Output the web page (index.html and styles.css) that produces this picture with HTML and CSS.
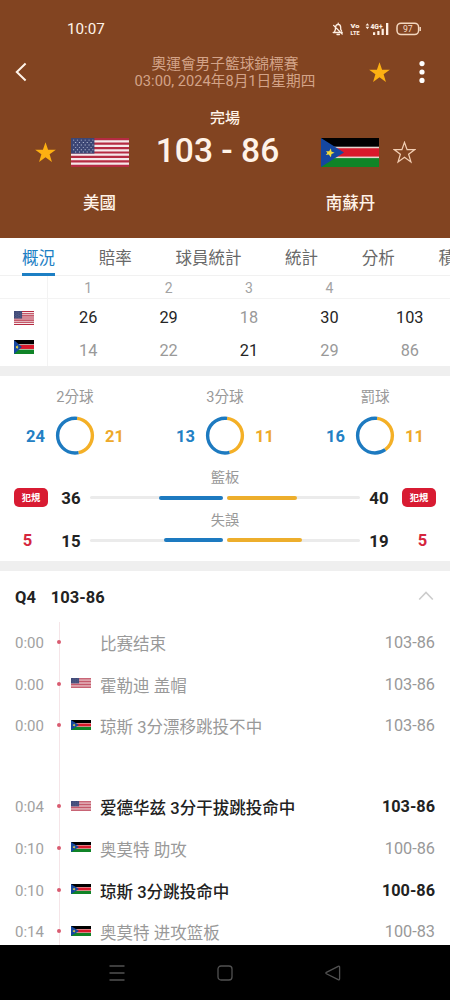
FILE: index.html
```html
<!DOCTYPE html>
<html lang="zh-Hant">
<head>
<meta charset="utf-8">
<meta name="viewport" content="width=device-width">
<title>美國 - 南蘇丹</title>
<link rel="stylesheet" href="styles.css">
</head>
<body>
<svg class="defs" width="0" height="0" aria-hidden="true">
  <symbol id="us" viewBox="0 0 57 30" preserveAspectRatio="none">
    <rect width="57" height="30" fill="#f5e9ea"/>
    <path d="M0 1.15H57M0 5.77H57M0 10.38H57M0 15H57M0 19.6H57M0 24.2H57M0 28.85H57" stroke="#b52b42" stroke-width="2.3"/>
    <rect width="23" height="16.1" fill="#3c4675"/>
    <path d="M2 2.2H22M4 4.7H22M2 7.2H22M4 9.7H22M2 12.2H22M4 14.4H22" stroke="#b9bfd6" stroke-width="1" stroke-dasharray="1.1 2.7"/>
  </symbol>
  <symbol id="ss" viewBox="0 0 58 30" preserveAspectRatio="none">
    <rect width="58" height="30" fill="#e5d6cf"/>
    <rect width="58" height="9" fill="#000"/>
    <rect y="10.6" width="58" height="8.6" fill="#d9182b"/>
    <rect y="20.8" width="58" height="9.2" fill="#108427"/>
    <path d="M0 0L23 15L0 30Z" fill="#1547a0"/>
    <path d="M5 13.6L8.2 13.6L9.9 10.6L10.4 14L13.6 15.2L10.5 16.5L9.9 19.8L7.8 17L4.8 17.6L6.4 15.4Z" fill="#f2dc3c"/>
  </symbol>
  <symbol id="star" viewBox="0 0 24 24">
    <path d="M12 1.4L14.7 9H22.8L16.3 13.8L18.7 21.8L12 17L5.3 21.8L7.7 13.8L1.2 9H9.3Z"/>
  </symbol>
</svg>

<header class="hero">
  <div class="status">
    <span class="clock">10:07</span>
    <svg class="status-icons" width="92" height="16" viewBox="0 0 92 16">
      <path d="M2.2 11.5H11.2M3.4 11L4.4 8.6V6.6C4.6 4.6 5.7 3.4 7.2 3.3C8.9 3.5 9.7 4.8 9.7 6.4V8.4L10.6 10M7.2 2.2V3M6 13.5H8.4M2.6 4.4L11.2 13" fill="none" stroke="#fff0e4" stroke-width="1.3" stroke-linecap="round"/>
      <g fill="#fff0e4" font-family="Roboto, sans-serif" font-weight="900">
        <text x="19.6" y="6.6" font-size="6.2" textLength="9" lengthAdjust="spacingAndGlyphs">Vo</text>
        <text x="19.6" y="14" font-size="6.2" textLength="9" lengthAdjust="spacingAndGlyphs">LTE</text>
        <text x="39.5" y="7.6" font-size="7" textLength="12" lengthAdjust="spacingAndGlyphs">4G+</text>
      </g>
      <path fill="#fff0e4" d="M34.6 4.6L36.4 2.2L38.2 4.6ZM34.6 5.8L36.4 8.2L38.2 5.8ZM42 11.3H44.2V14H42ZM46.3 10H48.5V14H46.3ZM50.6 7.8H52.8V14H50.6ZM55 2H57.3V14H55Z"/>
      <rect x="66" y="2.2" width="21.6" height="11.4" rx="4" fill="none" stroke="#f4d7bf" stroke-width="1.5"/>
      <path d="M89.2 6V10" stroke="#f4d7bf" stroke-width="1.5"/>
      <text x="76.8" y="11" text-anchor="middle" font-family="Roboto, sans-serif" font-size="8.6" fill="#f6dfcc">97</text>
    </svg>
  </div>
  <div class="titlebar">
    <svg class="back" width="14" height="20" viewBox="0 0 14 20"><path d="M11.6 1.5L2.8 10L11.6 18.5" fill="none" stroke="#fff4ea" stroke-width="2"/></svg>
    <div class="event"><div>奧運會男子籃球錦標賽</div><div>03:00, 2024年8月1日星期四</div></div>
    <svg class="fav" width="23" height="23" fill="#fdb012"><use href="#star"/></svg>
    <svg class="more" width="6" height="24" viewBox="0 0 6 24" fill="#fff"><circle cx="3" cy="3.6" r="2.6"/><circle cx="3" cy="12" r="2.6"/><circle cx="3" cy="20.4" r="2.6"/></svg>
  </div>
  <div class="state">完場</div>
  <div class="match">
    <svg class="team-star" width="23" height="23" fill="#fdb012"><use href="#star"/></svg>
    <svg class="flag-big" width="58" height="29"><use href="#us"/></svg>
    <div class="score">103 - 86</div>
    <svg class="flag-big" width="58" height="29"><use href="#ss"/></svg>
    <svg class="team-star" width="23" height="23" fill="none" stroke="#f3cfb4" stroke-width="1.3"><use href="#star"/></svg>
  </div>
  <div class="names"><span>美國</span><span>南蘇丹</span></div>
</header>

<nav class="tabs">
  <a class="tab active">概況</a><a class="tab">賠率</a><a class="tab">球員統計</a><a class="tab">統計</a><a class="tab">分析</a><a class="tab">積分</a>
</nav>

<section class="periods">
  <div class="prow head"><span></span><span>1</span><span>2</span><span>3</span><span>4</span><span></span></div>
  <div class="prow home"><span class="pf"><svg width="20" height="14"><use href="#us"/></svg></span><span class="win">26</span><span class="win">29</span><span>18</span><span class="win">30</span><span class="win">103</span></div>
  <div class="prow away"><span class="pf"><svg width="20" height="14"><use href="#ss"/></svg></span><span>14</span><span>22</span><span class="win">21</span><span>29</span><span>86</span></div>
</section>

<section class="stats">
  <div class="donuts">
    <div class="donut"><h3>2分球</h3><div class="ring"><b class="blue">24</b>
      <svg width="40" height="40" viewBox="0 0 40 40"><g transform="rotate(-90 20 19.6)"><circle class="away-arc" cx="20" cy="19.6" r="17.4" pathLength="100" stroke-dasharray="44.7 100" stroke-dashoffset="-2"/><circle class="home-arc" cx="20" cy="19.6" r="17.4" pathLength="100" stroke-dasharray="55.3 100" stroke-dashoffset="-46.7" transform="rotate(0 20 19.6)"/><circle class="home-arc" cx="20" cy="19.6" r="17.4" pathLength="100" stroke-dasharray="2 100"/></g></svg>
      <b class="gold">21</b></div></div>
    <div class="donut"><h3>3分球</h3><div class="ring"><b class="blue">13</b>
      <svg width="40" height="40" viewBox="0 0 40 40"><g transform="rotate(-90 20 19.6)"><circle class="away-arc" cx="20" cy="19.6" r="17.4" pathLength="100" stroke-dasharray="43.8 100" stroke-dashoffset="-2"/><circle class="home-arc" cx="20" cy="19.6" r="17.4" pathLength="100" stroke-dasharray="54.2 100" stroke-dashoffset="-45.8"/><circle class="home-arc" cx="20" cy="19.6" r="17.4" pathLength="100" stroke-dasharray="2 100"/></g></svg>
      <b class="gold">11</b></div></div>
    <div class="donut"><h3>罰球</h3><div class="ring"><b class="blue">16</b>
      <svg width="40" height="40" viewBox="0 0 40 40"><g transform="rotate(-90 20 19.6)"><circle class="away-arc" cx="20" cy="19.6" r="17.4" pathLength="100" stroke-dasharray="38 100" stroke-dashoffset="-2"/><circle class="home-arc" cx="20" cy="19.6" r="17.4" pathLength="100" stroke-dasharray="60 100" stroke-dashoffset="-40"/><circle class="home-arc" cx="20" cy="19.6" r="17.4" pathLength="100" stroke-dasharray="2 100"/></g></svg>
      <b class="gold">11</b></div></div>
  </div>
  <h4>籃板</h4>
  <div class="bar-row">
    <span class="foul">犯規</span><b>36</b>
    <span class="track left"><i style="width:64px"></i></span><span class="track right"><i style="width:70px"></i></span>
    <b>40</b><span class="foul">犯規</span>
  </div>
  <h4 class="second">失誤</h4>
  <div class="bar-row">
    <span class="fouls">5</span><b>15</b>
    <span class="track left"><i style="width:59px"></i></span><span class="track right"><i style="width:75px"></i></span>
    <b>19</b><span class="fouls">5</span>
  </div>
</section>

<section class="plays" lang="zh-Hans">
  <div class="quarter"><span>Q4</span><span>103-86</span>
    <svg width="16" height="10" viewBox="0 0 16 10"><path d="M1.2 8.5L8 1.5L14.8 8.5" fill="none" stroke="#ccc" stroke-width="1.6"/></svg>
  </div>
  <div class="feed">
    <div class="play"><time>0:00</time><i></i><span></span><p>比赛结束</p><em>103-86</em></div>
    <div class="play"><time>0:00</time><i></i><svg width="20" height="10"><use href="#us"/></svg><p>霍勒迪 盖帽</p><em>103-86</em></div>
    <div class="play tall"><time>0:00</time><i></i><svg width="20" height="10"><use href="#ss"/></svg><p>琼斯 3分漂移跳投不中</p><em>103-86</em></div>
    <div class="play scored"><time>0:04</time><i></i><svg width="20" height="10"><use href="#us"/></svg><p>爱德华兹 3分干拔跳投命中</p><em>103-86</em></div>
    <div class="play"><time>0:10</time><i></i><svg width="20" height="10"><use href="#ss"/></svg><p>奥莫特 助攻</p><em>100-86</em></div>
    <div class="play scored"><time>0:10</time><i></i><svg width="20" height="10"><use href="#ss"/></svg><p>琼斯 3分跳投命中</p><em>100-86</em></div>
    <div class="play"><time>0:14</time><i></i><svg width="20" height="10"><use href="#ss"/></svg><p>奥莫特 进攻篮板</p><em>100-83</em></div>
  </div>
</section>

<footer class="navbar">
  <svg width="18" height="18" viewBox="0 0 18 18"><path d="M1.5 2H16.5M1.5 9H16.5M1.5 16H16.5"/></svg>
  <svg width="18" height="18" viewBox="0 0 18 18"><rect x="2" y="2" width="14" height="14" rx="3"/></svg>
  <svg width="18" height="18" viewBox="0 0 18 18"><path d="M14.2 2.4Q15.6 1.8 15.6 3.4V14.6Q15.6 16.2 14.2 15.6L2.4 9.8Q1.4 9 2.4 8.3Z"/></svg>
</footer>
</body>
</html>
```
FILE: styles.css
```css
* { box-sizing: border-box; }
body {
  margin: 0;
  width: 450px;
  height: 1000px;
  overflow: hidden;
  display: flex;
  flex-direction: column;
  background: #fff;
  color: #222;
  font-family: Roboto, "Noto Sans CJK TC", sans-serif;
}
[lang="zh-Hans"] { font-family: Roboto, "Noto Sans CJK SC", sans-serif; }
svg { display: block; flex: none; }
h3, h4, p { margin: 0; font-weight: 400; }
.defs { position: absolute; }

/* header */
.hero { height: 238px; flex: none; background: #824421; color: #fff3e8; }
.status {
  display: flex;
  align-items: center;
  justify-content: space-between;
  height: 58px;
  padding: 0 27px 0 67px;
}
.clock { font-size: 15.2px; }
.titlebar { display: flex; align-items: center; height: 28px; line-height: 17px; padding: 0 25px 0 14px; }
.event {
  flex: 1;
  margin-left: 54px;
  padding-top: 1px;
  text-align: center;
  font-size: 14.7px;
  white-space: nowrap;
  color: #d3a388;
}
.fav { margin-right: 28px; }
.state { margin-top: 20px; height: 24px; line-height: 24px; text-align: center; font-size: 15px; font-weight: 500; }
.match { display: flex; align-items: center; height: 44px; padding: 0 34px; }
.match .flag-big { margin-left: 14px; }
.score {
  flex: 1;
  height: 44px;
  padding-right: 3px;
  text-align: center;
  font-size: 33.6px;
  font-weight: 500;
  line-height: 41px;
  white-space: nowrap;
}
.match .score + .flag-big { margin-left: 12px; }
.match .flag-big + .team-star { margin-left: 14px; }
.names { display: flex; height: 24px; margin-top: 17px; padding: 0 25px; font-size: 16.5px; font-weight: 500; line-height: 25px; }
.names span { width: 149px; text-align: center; }
.names span + span { margin-left: 102px; }

/* tabs */
.tabs {
  flex: none;
  display: flex;
  gap: 43.7px;
  height: 38px;
  padding-left: 22px;
  box-shadow: inset 0 -1px #f1f1f1;
  overflow: hidden;
  font-size: 16.5px;
  line-height: 42px;
  color: #686868;
}
.tab { flex: none; height: 38px; white-space: nowrap; }
.tab.active { color: #1d7fc4; box-shadow: inset 0 -3px #1d7fc4; }

/* period scores */
.periods { flex: none; height: 90px; color: #999; background: linear-gradient(#f3f3f3, #f3f3f3) 47px 0 / 1px 100% no-repeat; }
.prow { display: grid; grid-template-columns: 48px repeat(5, 1fr); text-align: center; font-size: 16.3px; }
.prow.head { height: 23px; line-height: 25px; font-size: 14px; color: #a3a3a3; border-bottom: 1px solid #f3f3f3; }
.prow.home { height: 36px; line-height: 37px; }
.prow.away { height: 31px; line-height: 31px; }
.pf { display: flex; align-items: center; justify-content: center; }
.away .pf { padding-bottom: 7px; }
.prow .win { color: #252525; }

/* team stats */
.stats { flex: none; height: 205px; border: solid #efefef; border-width: 10px 0; }
.donuts { display: grid; grid-template-columns: repeat(3, 1fr); }
.donut h3 { text-align: center; font-size: 14.6px; height: 39px; line-height: 42px; color: #999; }
.ring { display: flex; align-items: center; justify-content: center; gap: 10px; height: 41px; }
.ring b { width: 20px; padding-top: 2px; font-size: 16.5px; text-align: right; font-weight: 700; }
.ring .gold { text-align: left; }
.ring circle { fill: none; stroke-width: 3.4; }
.home-arc { stroke: #1d7ac0; }
.away-arc { stroke: #f4b027; }
.blue { color: #2380c4; }
.gold { color: #eea92a; }
h4 { margin-top: 11px; text-align: center; font-size: 14.2px; height: 20px; line-height: 20px; color: #999; }
h4.second { margin-top: 2px; }
.bar-row { display: flex; align-items: center; height: 21px; padding: 0 14px; }
.second + .bar-row { height: 20px; }
.bar-row b { width: 22px; margin: 0 8px 0 12px; padding-top: 1px; text-align: center; font-size: 16.8px; line-height: 20px; font-weight: 700; }
.bar-row .track + b { margin: 0 12px 0 8px; }
.track { display: flex; align-items: center; width: 133px; height: 3px; border-radius: 2px; background: #ebebeb; }
.track.left { justify-content: flex-end; }
.track.right { margin-left: 4px; }
.track i { height: 4px; border-radius: 2px; background: #1d7ac0; }
.track.right i { background: #edae2c; }
.foul { width: 34px; height: 19px; border-radius: 5px; background: #d81b32; color: #fff; font-size: 9.3px; font-weight: 700; line-height: 19px; text-align: center; }
.fouls { width: 34px; padding-top: 1px; text-align: center; color: #d5263d; font-size: 16.5px; line-height: 20px; font-weight: 700; }
.fouls:first-child { padding-right: 7px; }
.fouls:last-child { padding-left: 7px; }

/* play by play */
.plays { flex: 1; min-height: 0; overflow: hidden; }
.quarter { display: flex; align-items: center; height: 51px; padding: 1px 16px 0 15px; font-size: 16.5px; font-weight: 700; }
.quarter span + span { margin-left: 15px; }
.quarter svg { margin-left: auto; margin-bottom: 2px; }
.feed { background: linear-gradient(#f5e5e8, #f5e5e8) 59px 0 / 1px 100% no-repeat; color: #999; }
.play {
  display: grid;
  grid-template-columns: 42px 5px 20px 1fr auto;
  align-items: start;
  height: 41.65px;
  padding: 0 15px;
  font-size: 16.55px;
  line-height: 42.6px;
}
.play.tall { height: 81px; }
.play time { font-size: 15px; color: #a1a1a1; }
.play > i { width: 4px; height: 4px; margin-top: 18px; border-radius: 50%; background: #d95b70; }
.play > svg { margin: 14.5px 0 0 9px; }
.play p { margin-left: 18px; padding-top: 2px; height: 41px; white-space: nowrap; }
.play em { font-style: normal; font-size: 16.3px; }
.play.scored p { color: #222; font-weight: 500; }
.play.scored em { color: #222; font-weight: 700; }

.navbar { flex: none; height: 55px; display: flex; align-items: center; justify-content: center; gap: 90px; background: #000; }
.navbar svg { fill: none; stroke: #515151; stroke-width: 1.3; }
```
